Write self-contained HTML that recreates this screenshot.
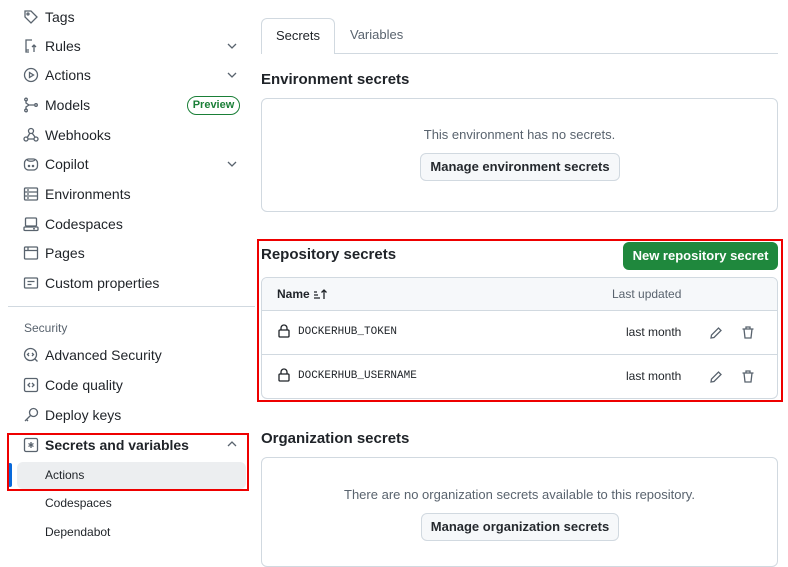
<!DOCTYPE html>
<html><head><meta charset="utf-8"><style>
*{box-sizing:border-box;margin:0;padding:0}
body{width:788px;height:547px;overflow:hidden;background:#fff;font-family:"Liberation Sans",sans-serif;color:#1f2328;position:relative;font-size:14px}
.a{position:absolute;white-space:nowrap}
.nav{left:45px;font-size:14px;line-height:18px}
.ic{position:absolute;left:23px;width:16px;height:16px}
.chev{position:absolute;left:226px;width:12px;height:12px}
.mono{font-family:"Liberation Mono",monospace;font-size:11px}
.btn{position:absolute;border:1px solid #d1d9e0;background:#f6f8fa;border-radius:6px;font-weight:bold;font-size:13px;text-align:center;color:#25292e}
.box{position:absolute;border:1px solid #d1d9e0;border-radius:6px}
h3{position:absolute;font-size:15px;font-weight:bold;white-space:nowrap}
svg{fill:none;stroke:#59636e;stroke-width:1.3}
</style></head><body>
<!-- sidebar -->
<svg class="ic" style="top:9px" viewBox="0 0 16 16"><path d="M2 2h6l6 6-6 6-6-6z"/><circle cx="5" cy="5" r="1"/></svg><div class="a nav" style="top:8px">Tags</div>
<svg class="ic" style="top:38px" viewBox="0 0 16 16"><path d="M9 2H3v10h3M3 12v2h3M11 14V7M9 9l2-2 2 2"/></svg><div class="a nav" style="top:37px">Rules</div>
<svg class="chev" style="top:40px" viewBox="0 0 12 12"><path d="M2 4l4 4 4-4"/></svg>
<svg class="ic" style="top:67px" viewBox="0 0 16 16"><circle cx="8" cy="8" r="6.5"/><path d="M6.5 5.5v5l4-2.5z"/></svg><div class="a nav" style="top:66px">Actions</div>
<svg class="chev" style="top:69px" viewBox="0 0 12 12"><path d="M2 4l4 4 4-4"/></svg>
<svg class="ic" style="top:97px" viewBox="0 0 16 16"><circle cx="3" cy="2.5" r="1.3"/><circle cx="3" cy="13.5" r="1.3"/><circle cx="13" cy="8" r="1.3"/><path d="M3 4v2l3 2h5M6 8l-3 2v2"/></svg><div class="a nav" style="top:96px">Models</div>
<div class="a" style="left:187px;top:96px;width:53px;height:19px;border:1px solid #1a7f37;border-radius:10px;color:#1a7f37;font-size:11px;font-weight:bold;text-align:center;line-height:17px">Preview</div>
<svg class="ic" style="top:127px" viewBox="0 0 16 16"><circle cx="8" cy="4" r="2.5"/><circle cx="3" cy="12" r="2"/><circle cx="13" cy="12" r="2"/><path d="M7 6l-3 5M5 12h6M9 6l3 4"/></svg><div class="a nav" style="top:126px">Webhooks</div>
<svg class="ic" style="top:156px" viewBox="0 0 16 16"><rect x="1.5" y="3" width="13" height="11" rx="4"/><circle cx="6" cy="10" r=".6"/><circle cx="10" cy="10" r=".6"/><path d="M4 3c0 3 8 3 8 0"/></svg><div class="a nav" style="top:155px">Copilot</div>
<svg class="chev" style="top:158px" viewBox="0 0 12 12"><path d="M2 4l4 4 4-4"/></svg>
<svg class="ic" style="top:186px" viewBox="0 0 16 16"><rect x="1.5" y="2" width="13" height="12" rx="1"/><path d="M1.5 6h13M1.5 10h13M4 4h2M4 8h2M4 12h2"/></svg><div class="a nav" style="top:185px">Environments</div>
<svg class="ic" style="top:216px" viewBox="0 0 16 16"><rect x="2.5" y="2" width="11" height="8" rx="1"/><rect x="1" y="11" width="14" height="3.5" rx="1"/><path d="M10 12.8h2"/></svg><div class="a nav" style="top:215px">Codespaces</div>
<svg class="ic" style="top:245px" viewBox="0 0 16 16"><rect x="1.5" y="2" width="13" height="12" rx="1"/><path d="M1.5 5.5h13M5 2v3.5"/></svg><div class="a nav" style="top:244px">Pages</div>
<svg class="ic" style="top:275px" viewBox="0 0 16 16"><rect x="1.5" y="3" width="13" height="10" rx="1"/><path d="M4.5 6.5h7M4.5 9.5h4"/></svg><div class="a nav" style="top:274px">Custom properties</div>
<div class="a" style="left:8px;top:306px;width:247px;height:1px;background:#d1d9e0"></div>
<div class="a" style="left:24px;top:321px;font-size:12px;color:#59636e">Security</div>
<svg class="ic" style="top:347px" viewBox="0 0 16 16"><circle cx="7.5" cy="7.5" r="6"/><path d="M6 6l-1.5 1.5L6 9M9 6l1.5 1.5L9 9M11.5 11.5l3 3"/></svg><div class="a nav" style="top:346px">Advanced Security</div>
<svg class="ic" style="top:377px" viewBox="0 0 16 16"><rect x="1.5" y="1.5" width="13" height="13" rx="1.5"/><path d="M7 6L5 8l2 2M9 6l2 2-2 2"/></svg><div class="a nav" style="top:376px">Code quality</div>
<svg class="ic" style="top:407px" viewBox="0 0 16 16"><circle cx="10.5" cy="5.5" r="4"/><path d="M7.5 8.5L2 14M3.5 12.5l1.5 1.5"/></svg><div class="a nav" style="top:406px">Deploy keys</div>
<svg class="ic" style="top:437px" viewBox="0 0 16 16"><rect x="1.5" y="1.5" width="13" height="13" rx="1.5"/><path d="M8 5v6M5.5 6.5l5 3M10.5 6.5l-5 3"/></svg><div class="a nav" style="top:436px;font-weight:bold">Secrets and variables</div>
<svg class="chev" style="top:438px" viewBox="0 0 12 12"><path d="M2 8l4-4 4 4"/></svg>
<div class="a" style="left:17px;top:462px;width:229px;height:27px;background:#eceef0;border-radius:6px"></div>
<div class="a" style="left:8px;top:463px;width:4px;height:24px;background:#0969da;border-radius:2px"></div>
<div class="a" style="left:45px;top:468px;font-size:12px">Actions</div>
<div class="a" style="left:7px;top:433px;width:242px;height:58px;border:2px solid #e00"></div>
<div class="a" style="left:45px;top:496px;font-size:12px">Codespaces</div>
<div class="a" style="left:45px;top:525px;font-size:12px">Dependabot</div>

<!-- tabs -->
<div class="a" style="left:261px;top:53px;width:517px;height:1px;background:#d1d9e0"></div>
<div class="a" style="left:261px;top:18px;width:74px;height:36px;border:1px solid #d1d9e0;border-bottom:none;border-radius:6px 6px 0 0;background:#fff;text-align:center;line-height:34px;font-size:13px">Secrets</div>
<div class="a" style="left:350px;top:27px;font-size:13px;color:#59636e">Variables</div>

<h3 style="left:261px;top:71px">Environment secrets</h3>
<div class="box" style="left:261px;top:98px;width:517px;height:114px"></div>
<div class="a" style="left:261px;width:517px;text-align:center;top:127px;font-size:13px;color:#59636e">This environment has no secrets.</div>
<div class="btn" style="left:420px;top:153px;width:200px;height:28px;line-height:26px">Manage environment secrets</div>

<h3 style="left:261px;top:246px">Repository secrets</h3>
<div class="a" style="left:623px;top:242px;width:155px;height:28px;background:#1f883d;border-radius:6px;color:#fff;font-weight:bold;font-size:13px;text-align:center;line-height:27px">New repository secret</div>
<div class="box" style="left:261px;top:277px;width:517px;height:122px;overflow:hidden">
<div style="height:33px;background:#f6f8fa;border-bottom:1px solid #d1d9e0"></div>
<div style="height:44px;border-bottom:1px solid #d1d9e0"></div>
</div>
<div class="a" style="left:277px;top:287px;font-size:12px;font-weight:bold">Name</div>
<svg class="a" style="left:313px;top:287px;width:16px;height:14px" viewBox="0 0 16 14"><path d="M1 5h3M1 8h4M1 11h6M11 12V3M8.5 5.5L11 3l2.5 2.5" stroke="#1f2328"/></svg>
<div class="a" style="left:612px;top:287px;font-size:12px;color:#59636e">Last updated</div>
<svg class="a" style="left:277px;top:324px;width:14px;height:14px" viewBox="0 0 14 14"><rect x="2" y="6" width="10" height="7" rx="1" stroke="#1f2328"/><path d="M4 6V4a3 3 0 016 0v2" stroke="#1f2328"/></svg>
<div class="a mono" style="left:298px;top:326px">DOCKERHUB_TOKEN</div>
<div class="a" style="left:626px;top:325px;font-size:12px">last month</div>
<svg class="a" style="left:709px;top:326px;width:14px;height:14px" viewBox="0 0 14 14"><path d="M2 12l.5-3L9.5 2l2.5 2.5-7 7z"/></svg>
<svg class="a" style="left:741px;top:325px;width:14px;height:15px" viewBox="0 0 14 15"><path d="M1.5 4h11M5 4V2h4v2M3 4l1 9h6l1-9"/></svg>
<svg class="a" style="left:277px;top:368px;width:14px;height:14px" viewBox="0 0 14 14"><rect x="2" y="6" width="10" height="7" rx="1" stroke="#1f2328"/><path d="M4 6V4a3 3 0 016 0v2" stroke="#1f2328"/></svg>
<div class="a mono" style="left:298px;top:370px">DOCKERHUB_USERNAME</div>
<div class="a" style="left:626px;top:369px;font-size:12px">last month</div>
<svg class="a" style="left:709px;top:370px;width:14px;height:14px" viewBox="0 0 14 14"><path d="M2 12l.5-3L9.5 2l2.5 2.5-7 7z"/></svg>
<svg class="a" style="left:741px;top:369px;width:14px;height:15px" viewBox="0 0 14 15"><path d="M1.5 4h11M5 4V2h4v2M3 4l1 9h6l1-9"/></svg>
<div class="a" style="left:257px;top:239px;width:526px;height:163px;border:2px solid #e00"></div>

<h3 style="left:261px;top:430px">Organization secrets</h3>
<div class="box" style="left:261px;top:457px;width:517px;height:110px"></div>
<div class="a" style="left:261px;width:517px;text-align:center;top:487px;font-size:13px;color:#59636e">There are no organization secrets available to this repository.</div>
<div class="btn" style="left:421px;top:513px;width:198px;height:28px;line-height:26px">Manage organization secrets</div>
</body></html>
